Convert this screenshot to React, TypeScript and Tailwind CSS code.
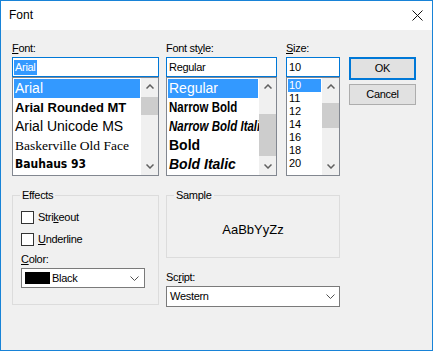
const Up = () => (
  <svg width="8" height="5" viewBox="0 0 8 5">
    <polyline points="0.5,4.5 4,1 7.5,4.5" fill="none" stroke="#606060" strokeWidth="1.5" />
  </svg>
);

const Down = () => (
  <svg width="8" height="5" viewBox="0 0 8 5">
    <polyline points="0.5,0.5 4,4 7.5,0.5" fill="none" stroke="#606060" strokeWidth="1.5" />
  </svg>
);

const Chevron = () => (
  <svg width="9" height="5" viewBox="0 0 9 5">
    <polyline points="0.5,0.5 4.5,4.5 8.5,0.5" fill="none" stroke="#505050" strokeWidth="1" />
  </svg>
);

function ScrollBar({ track }: { track: React.ReactNode }) {
  return (
    <div className="w-[17px] shrink-0 bg-[#f0f0f0] flex flex-col">
      <div className="h-[17px] flex items-center justify-center">
        <Up />
      </div>
      <div className="flex-1">{track}</div>
      <div className="h-[17px] flex items-center justify-center">
        <Down />
      </div>
    </div>
  );
}

export default function App() {
  return (
    <div className="w-[433px] h-[351px] border border-[#1883d7] bg-[#f0f0f0] flex flex-col text-[11px] leading-[13px] tracking-[-0.3px] text-black font-['Liberation_Sans',Arial,sans-serif]">
      {/* title bar */}
      <div className="h-[29px] shrink-0 bg-white flex items-center justify-between pl-[8px] pr-[9px]">
        <span className="text-[12px] tracking-normal">Font</span>
        <svg width="11" height="11" viewBox="0 0 11 11">
          <path d="M0.5 0.5 L10.5 10.5 M10.5 0.5 L0.5 10.5" stroke="#111" strokeWidth="1" />
        </svg>
      </div>

      {/* lists */}
      <div className="flex pl-[11px] pt-[12px]">
        {/* font */}
        <div className="w-[147px]">
          <div className="h-[15px]">
            <span className="underline">F</span>ont:
          </div>
          <div className="h-[20px] border border-[#0078d7] bg-white flex items-center pl-[1px]">
            <span className="bg-[#3399ff] text-white px-[1px] leading-[15px]">Arial</span>
          </div>
          <div className="h-[99px] border border-[#828790] bg-white flex">
            <div className="flex-1 min-w-0 p-[1px] flex flex-col overflow-hidden tracking-normal">
              <div className="h-[19px] shrink-0 flex items-center pl-[1px] bg-[#3399ff] text-white text-[14px]">Arial</div>
              <div className="h-[19px] shrink-0 flex items-center pl-[1px] text-[13px] font-bold whitespace-nowrap">Arial Rounded MT</div>
              <div className="h-[19px] shrink-0 flex items-center pl-[1px] text-[14px] whitespace-nowrap">Arial Unicode MS</div>
              <div className="h-[19px] shrink-0 flex items-center pl-[1px] text-[13.5px] whitespace-nowrap font-['Liberation_Serif',serif]">Baskerville Old Face</div>
              <div className="h-[19px] shrink-0 flex items-center pl-[1px] text-[12px] font-bold whitespace-nowrap font-['DejaVu_Sans_Condensed','DejaVu_Sans',sans-serif]">Bauhaus 93</div>
            </div>
            <ScrollBar track={<div className="pt-[2px]"><div className="h-[18px] bg-[#cdcdcd]" /></div>} />
          </div>
        </div>

        {/* style */}
        <div className="ml-[7px] w-[111px]">
          <div className="h-[15px]">
            Font st<span className="underline">y</span>le:
          </div>
          <div className="h-[20px] border border-[#0078d7] bg-white flex items-center pl-[2px]">Regular</div>
          <div className="h-[99px] border border-[#828790] bg-white flex">
            <div className="flex-1 min-w-0 p-[1px] flex flex-col overflow-hidden tracking-normal text-[14px]">
              <div className="h-[19px] shrink-0 flex items-center pl-[1px] bg-[#3399ff] text-white">Regular</div>
              <div className="h-[19px] shrink-0 flex items-center pl-[1px] font-bold whitespace-nowrap">
                <span className="inline-block origin-left scale-x-[0.82]">Narrow Bold</span>
              </div>
              <div className="h-[19px] shrink-0 flex items-center pl-[1px] font-bold italic whitespace-nowrap">
                <span className="inline-block origin-left scale-x-[0.82]">Narrow Bold Italic</span>
              </div>
              <div className="h-[19px] shrink-0 flex items-center pl-[1px] font-bold">Bold</div>
              <div className="h-[19px] shrink-0 flex items-center pl-[1px] font-bold italic whitespace-nowrap">Bold Italic</div>
            </div>
            <ScrollBar track={<div className="pt-[19px]"><div className="h-[42px] bg-[#cdcdcd]" /></div>} />
          </div>
        </div>

        {/* size */}
        <div className="ml-[9px] w-[54px]">
          <div className="h-[15px]">
            <span className="underline">S</span>ize:
          </div>
          <div className="h-[20px] border border-[#0078d7] bg-white flex items-center pl-[2px] tracking-normal">10</div>
          <div className="h-[99px] border border-[#828790] bg-white flex">
            <div className="flex-1 min-w-0 p-[1px] flex flex-col overflow-hidden tracking-normal">
              <div className="h-[13px] shrink-0 flex items-center pl-[1px] bg-[#3399ff] text-white">10</div>
              <div className="h-[13px] shrink-0 flex items-center pl-[1px]">11</div>
              <div className="h-[13px] shrink-0 flex items-center pl-[1px]">12</div>
              <div className="h-[13px] shrink-0 flex items-center pl-[1px]">14</div>
              <div className="h-[13px] shrink-0 flex items-center pl-[1px]">16</div>
              <div className="h-[13px] shrink-0 flex items-center pl-[1px]">18</div>
              <div className="h-[13px] shrink-0 flex items-center pl-[1px]">20</div>
            </div>
            <ScrollBar track={<div className="pt-[8px]"><div className="h-[25px] bg-[#cdcdcd]" /></div>} />
          </div>
        </div>

        {/* buttons */}
        <div className="ml-[9px] w-[67px] pt-[15px] flex flex-col">
          <button className="h-[23px] border-2 border-[#0078d7] bg-[#e1e1e1] flex items-center justify-center">OK</button>
          <button className="mt-[4px] h-[21px] border border-[#adadad] bg-[#e1e1e1] flex items-center justify-center">Cancel</button>
        </div>
      </div>

      {/* effects / sample */}
      <div className="flex pl-[11px] mt-[13px]">
        <fieldset className="w-[147px] h-[116px] border border-[#dcdcdc] px-[8px]">
          <legend className="-ml-[1px] px-[2px] leading-[13px]">Effects</legend>
          <div className="mt-[9px] h-[13px] flex items-center">
            <div className="w-[13px] h-[13px] border border-[#333333] bg-white" />
            <span className="ml-[4px]">
              Stri<span className="underline">k</span>eout
            </span>
          </div>
          <div className="mt-[9px] h-[13px] flex items-center">
            <div className="w-[13px] h-[13px] border border-[#333333] bg-white" />
            <span className="ml-[4px]">
              <span className="underline">U</span>nderline
            </span>
          </div>
          <div className="mt-[7px] h-[13px]">
            <span className="underline">C</span>olor:
          </div>
          <div className="mt-[2px] w-[124px] h-[20px] border border-[#7a7a7a] bg-white flex items-center pl-[3px] pr-[5px]">
            <div className="w-[25px] h-[12px] bg-black" />
            <span className="ml-[2px]">Black</span>
            <span className="ml-auto flex">
              <Chevron />
            </span>
          </div>
        </fieldset>

        <div className="ml-[7px] w-[174px] flex flex-col">
          <fieldset className="h-[69px] border border-[#dcdcdc] px-[8px]">
            <legend className="-ml-[1px] px-[2px] leading-[13px]">Sample</legend>
            <div className="h-[55px] flex items-center justify-center text-[13px] tracking-normal">AaBbYyZz</div>
          </fieldset>
          <div className="mt-[13px] h-[13px]">
            Sc<span className="underline">r</span>ipt:
          </div>
          <div className="mt-[2px] h-[21px] border border-[#7a7a7a] bg-white flex items-center pl-[3px] pr-[4px]">
            <span>Western</span>
            <span className="ml-auto flex">
              <Chevron />
            </span>
          </div>
        </div>
      </div>
    </div>
  );
}
